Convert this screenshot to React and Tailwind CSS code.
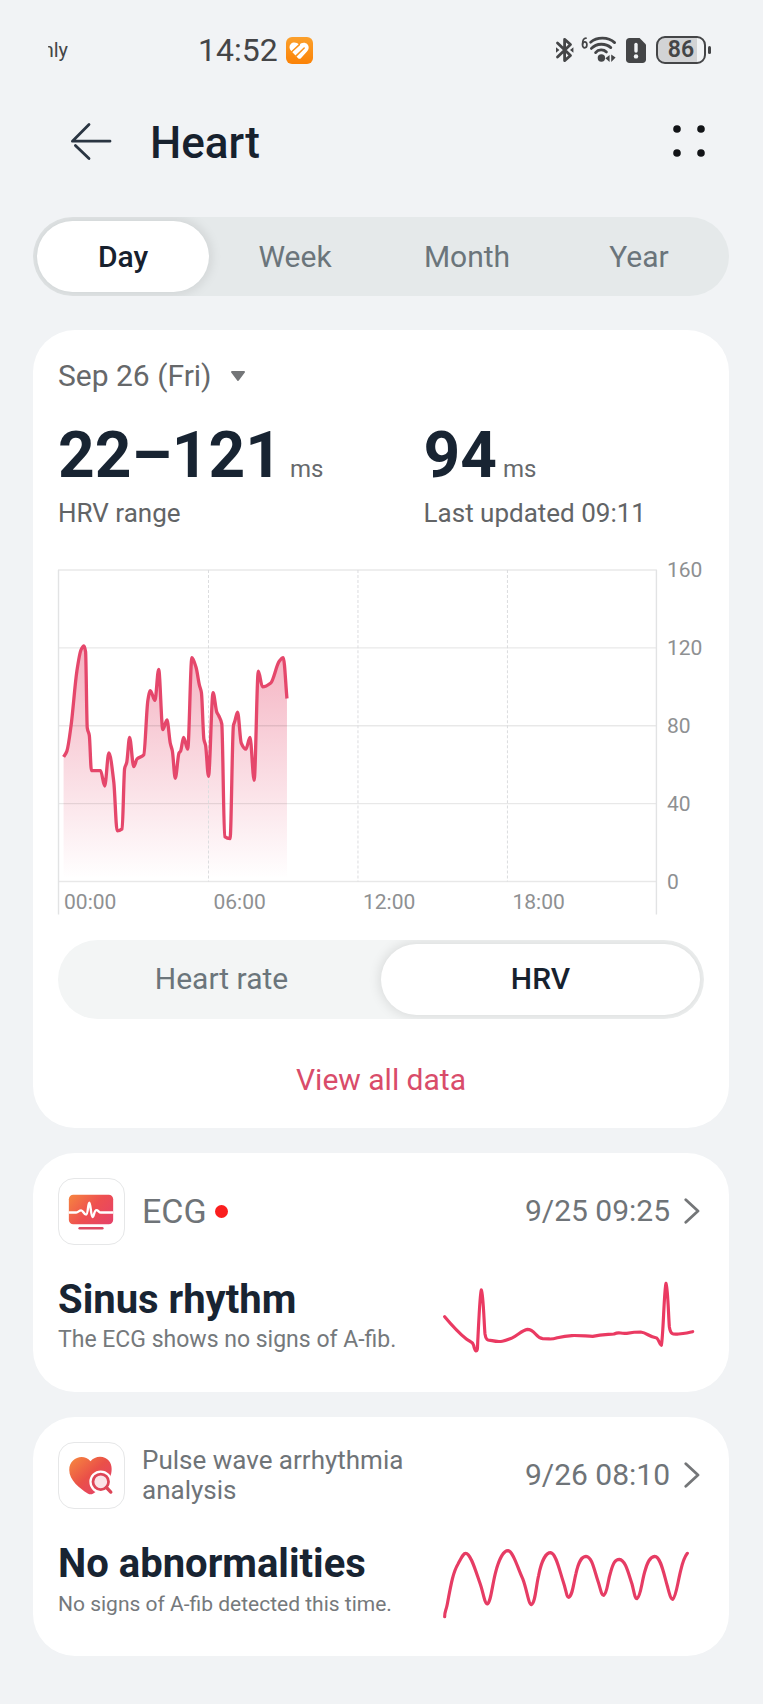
import React, { useState } from "react";

// [minute of the day, HRV in ms]
const hrvData = [
  [11, 64], [19, 67], [29, 80], [43, 108], [53, 119], [60, 121], [64, 118],
  [68, 79], [73, 75], [78, 57], [100, 57], [110, 49], [120, 66], [132, 51],
  [140, 26], [152, 27], [158, 58], [163, 61], [170, 74], [180, 59], [188, 63],
  [204, 65], [214, 93], [220, 98], [231, 93], [240, 109], [250, 78], [260, 83],
  [268, 71], [273, 67], [280, 53], [289, 66], [293, 67], [300, 74], [310, 68],
  [320, 115], [330, 110], [338, 101], [343, 97], [349, 73], [353, 70],
  [360, 54], [371, 97], [380, 87], [385, 85], [392, 81], [399, 23], [412, 22],
  [420, 80], [423, 82], [430, 87], [439, 71], [450, 68], [460, 74], [470, 52],
  [480, 108], [490, 100], [510, 102], [530, 113], [540, 115], [549, 94],
];

const PLOT_WIDTH = 597;
const PLOT_BOTTOM = 321;
const xOf = (minute) => 1 + (minute / 1440) * PLOT_WIDTH;
const yOf = (value) => PLOT_BOTTOM - (value / 160) * 311;

// Monotone cubic curve, so the line never overshoots a reading
const smoothPath = (points) => {
  const slopes = points.slice(1).map(([x, y], i) => {
    return (y - points[i][1]) / (x - points[i][0]);
  });
  const tangents = points.map((_, i) => {
    if (i === 0) return slopes[0];
    if (i === points.length - 1) return slopes[i - 1];
    const a = slopes[i - 1];
    const b = slopes[i];
    return a * b <= 0 ? 0 : (2 * a * b) / (a + b);
  });
  return points.slice(1).reduce((path, [x, y], i) => {
    const [px, py] = points[i];
    const d = (x - px) / 3;
    return `${path} C${px + d} ${py + tangents[i] * d} ${x - d} ${
      y - tangents[i + 1] * d
    } ${x} ${y}`;
  }, `M${points[0][0]} ${points[0][1]}`);
};

const StatusBar = () => (
  <div className="flex h-[100px] items-center justify-between pl-12 pr-[52px] text-[#444547]">
    <div className="flex items-center">
      <div className="flex w-5 justify-end overflow-hidden text-[20px] leading-7">
        nly
      </div>
      <div className="ml-[130px] text-[32px] leading-10">14:52</div>
      <svg className="ml-2 h-[27px] w-[27px]" viewBox="0 0 27 27" aria-hidden="true">
        <defs>
          <linearGradient id="appIcon" x1="0" y1="0" x2="0" y2="1">
            <stop offset="0" stopColor="#fba02c" />
            <stop offset="1" stopColor="#fb8206" />
          </linearGradient>
        </defs>
        <rect width="27" height="27" rx="6" fill="url(#appIcon)" />
        <path
          d="M13.2 7.8C15.2 5.2 19.4 4.9 21.4 7.2C23.4 9.6 23 12.2 21 14.4L14.9 21.2C14.1 22 12.9 22 12.1 21.2L5.2 14C3 11.6 3 8.8 4.8 6.9C7 4.7 11 5.2 13.2 7.8Z"
          fill="#fff"
        />
        <path
          d="M4.6 15.8L13.4 7.6M9.4 19.6L18.2 11"
          stroke="#fb921a"
          strokeWidth="1.5"
          strokeLinecap="round"
        />
      </svg>
    </div>

    <div className="flex items-center">
      <svg className="h-[26px] w-[19px]" viewBox="0 0 19 26" fill="none" aria-hidden="true">
        <path
          d="M2.5 6L15.5 18.5L9.6 23.6V2.4L15.5 7.5L2.5 20"
          stroke="currentColor"
          strokeWidth="2.8"
          strokeLinecap="round"
          strokeLinejoin="round"
        />
        <path d="M1 10.2L4.4 13L1 15.8ZM18.4 10.2L15 13L18.4 15.8Z" fill="currentColor" />
      </svg>
      <svg className="ml-[7px] h-[28px] w-9" viewBox="0 0 36 28" fill="none" aria-hidden="true">
        <g stroke="currentColor" strokeLinecap="round">
          <path d="M5 2.2C2.4 2.2 1.6 4 1.6 8" strokeWidth="1.7" />
          <ellipse cx="3.7" cy="8.8" rx="2.2" ry="3" strokeWidth="1.7" />
          <path d="M9.6 6.2C16 .8 27 .8 33.6 6.6" strokeWidth="2.8" />
          <path d="M10.4 12.4C15.6 7 24.6 7 29.8 11.6" strokeWidth="2.8" />
          <path d="M14.6 16.6C17.4 13.2 22.6 13.2 25.4 16" strokeWidth="2.8" />
        </g>
        <circle cx="20.4" cy="22" r="3.7" fill="currentColor" />
        <path d="M28.6 19V26L24.4 22.2ZM30.2 18.4V26L34.6 21.4Z" fill="currentColor" />
      </svg>
      <svg className="ml-[9px] h-[25px] w-5" viewBox="0 0 20 25" aria-hidden="true">
        <path
          d="M3.5 0H13.6L20 6.4V21.5C20 23.6 18.6 25 16.5 25H3.5C1.4 25 0 23.6 0 21.5V3.5C0 1.4 1.4 0 3.5 0Z"
          fill="currentColor"
        />
        <path d="M10 6.4V13" stroke="#f1f3f5" strokeWidth="3.4" strokeLinecap="round" />
        <circle cx="10" cy="18.4" r="2.2" fill="#f1f3f5" />
      </svg>
      <div className="ml-2.5 flex items-center gap-0.5">
        <div className="flex h-7 w-[50px] items-center justify-center rounded-[9px] border-2 border-[#444547] bg-linear-to-r from-[#d2d3d5] from-85% to-[#f1f3f5] to-85% text-[23px] leading-6 font-semibold">
          86
        </div>
        <div className="h-2 w-[3px] rounded-sm bg-[#444547]" />
      </div>
    </div>
  </div>
);

const Header = () => (
  <header className="flex h-[86px] items-center justify-between pl-[70px] pr-[58px]">
    <div className="flex items-center">
      <button aria-label="Back">
        <svg className="h-[42px] w-[42px]" viewBox="0 0 42 42" fill="none">
          <path
            d="M19 2.6L2.4 19.2H40M5.4 23.4L19 36.6"
            stroke="#2a3542"
            strokeWidth="2.8"
            strokeLinecap="round"
            strokeLinejoin="round"
          />
        </svg>
      </button>
      <h1 className="ml-[38px] text-[44px] leading-[52px] font-medium text-[#17212e]">
        Heart
      </h1>
    </div>
    <button aria-label="More options">
      <svg className="h-[36px] w-8" viewBox="0 0 32 36" fill="#121417">
        <circle cx="4" cy="4" r="3.8" />
        <circle cx="28" cy="4" r="3.8" />
        <circle cx="4" cy="28" r="3.8" />
        <circle cx="28" cy="28" r="3.8" />
      </svg>
    </button>
  </header>
);

const Segmented = ({ options, value, onChange, className }) => (
  <div
    className={`flex h-[79px] overflow-hidden rounded-full p-1 text-[30px] leading-10 ${className}`}
  >
    {options.map((option) => (
      <button
        key={option}
        onClick={() => onChange(option)}
        aria-pressed={option === value}
        className={`flex-1 rounded-full ${
          option === value
            ? "bg-white font-medium text-[#17212e] shadow-[0_0_12px_2px_rgba(0,0,0,0.1)]"
            : "text-[#6b757b]"
        }`}
      >
        {option}
      </button>
    ))}
  </div>
);

const Metric = ({ value, label, gap }) => (
  <div>
    <div className={`flex h-[72px] items-baseline ${gap}`}>
      <span className="text-[64px] leading-[72px] font-bold text-[#182432]">
        {value}
      </span>
      <span className="text-[24px] leading-9 text-[#66696c]">ms</span>
    </div>
    <div className="mt-[3px] text-[26px] leading-9 text-[#626466]">{label}</div>
  </div>
);

const HrvChart = () => {
  const points = hrvData.map(([minute, value]) => [xOf(minute), yOf(value)]);
  const line = smoothPath(points);
  const first = points[0][0];
  const last = points[points.length - 1][0];

  return (
    <svg
      className="mt-[29px] w-full overflow-visible"
      viewBox="0 0 645 356"
      role="img"
      aria-label="HRV"
    >
      <defs>
        <linearGradient id="hrvFill" x1="0" y1="86" x2="0" y2="318" gradientUnits="userSpaceOnUse">
          <stop offset="0" stopColor="#e5476b" stopOpacity="0.42" />
          <stop offset="1" stopColor="#e5476b" stopOpacity="0" />
        </linearGradient>
      </defs>
      <path
        d={`${line} L${last} ${PLOT_BOTTOM} L${first} ${PLOT_BOTTOM} Z`}
        fill="url(#hrvFill)"
      />
      {[0, 40, 80, 120, 160].map((value) => (
        <g key={value}>
          <line
            x1="0"
            x2="598"
            y1={yOf(value)}
            y2={yOf(value)}
            stroke="#000"
            strokeOpacity="0.09"
            strokeWidth="1.4"
          />
          <text x="608" y={yOf(value) + 7} fontSize="21" fill="#8e9092">
            {value}
          </text>
        </g>
      ))}
      {[360, 720, 1080].map((minute) => (
        <line
          key={minute}
          x1={xOf(minute)}
          x2={xOf(minute)}
          y1="10"
          y2={PLOT_BOTTOM}
          stroke="#dcdddf"
          strokeDasharray="3 2"
        />
      ))}
      <path d="M0.5 10V354M597.5 10V354" stroke="#e2e3e4" strokeWidth="1.4" />
      {["00:00", "06:00", "12:00", "18:00"].map((label, i) => (
        <text key={label} x={xOf(i * 360) + 5} y="348" fontSize="21" fill="#8e9092">
          {label}
        </text>
      ))}
      <path
        d={line}
        fill="none"
        stroke="#e5476b"
        strokeWidth="3.3"
        strokeLinejoin="round"
      />
    </svg>
  );
};

const EcgIcon = () => (
  <svg className="h-full w-full" viewBox="0 0 66 66" fill="none" aria-hidden="true">
    <defs>
      <linearGradient id="ecgIcon" x1="10" y1="16" x2="50" y2="52" gradientUnits="userSpaceOnUse">
        <stop offset="0" stopColor="#f6853f" />
        <stop offset="0.5" stopColor="#ee4f50" />
        <stop offset="1" stopColor="#e5416a" />
      </linearGradient>
    </defs>
    <rect x="10" y="16" width="45" height="30" rx="4.5" fill="url(#ecgIcon)" />
    <path
      d="M10 34H17.5C19.5 34 20.5 31.8 22.5 31.8C24.5 31.8 25.5 36.2 27.5 36.2C29.5 36.2 29.4 24 30.8 24C32.2 24 32.4 38.6 34 38.6C35.6 38.6 35.6 31.6 38 31.6C40 31.6 40.4 34 42.5 34H55"
      stroke="#fff"
      strokeWidth="2.4"
      strokeLinejoin="round"
    />
    <path d="M21 50H44" stroke="#dd4a63" strokeWidth="2.6" strokeLinecap="round" />
  </svg>
);

const PulseIcon = () => (
  <svg className="h-full w-full" viewBox="0 0 66 66" fill="none" aria-hidden="true">
    <defs>
      <linearGradient id="pulseIcon" x1="12" y1="16" x2="42" y2="50" gradientUnits="userSpaceOnUse">
        <stop offset="0" stopColor="#f6853f" />
        <stop offset="0.55" stopColor="#ea5048" />
        <stop offset="1" stopColor="#e64366" />
      </linearGradient>
    </defs>
    <path
      d="M32 18.6C35.6 14 42 12.8 47 15.2C53 18.2 54.4 24.6 53 31C51.6 39 42 47 34.8 51.2C32.8 52.4 31.2 52.4 29.2 51.2C21 46.2 10.4 37.6 10.4 27.4C10.4 15.2 24.6 9.8 32 18.6Z"
      fill="url(#pulseIcon)"
    />
    <path d="M44 40L56 52" stroke="#fff" strokeWidth="8" />
    <circle cx="42.4" cy="39.4" r="11.6" fill="#fff" />
    <circle cx="42.4" cy="39.4" r="7.9" fill="#fbe3e7" stroke="#dd4557" strokeWidth="2.8" />
    <path d="M48.2 45.2L52.6 49.8" stroke="#dd4557" strokeWidth="3.4" strokeLinecap="round" />
  </svg>
);

const RecordCard = ({ icon, heading, time, result, detail, children }) => (
  <section className="mt-[25px] rounded-[42px] bg-white px-[25px] pt-[25px] pb-9">
    <a href="#record" className="flex h-[67px] items-center text-[#6f7478]">
      <div className="h-[67px] w-[67px] shrink-0 rounded-2xl border border-[#e6e7e8]">
        {icon}
      </div>
      <div className="ml-[17px] flex flex-1 items-center">{heading}</div>
      <div className="text-[30px] leading-10">{time}</div>
      <svg className="mr-1 ml-[14px] h-[26px] w-4" viewBox="0 0 16 26" fill="none" aria-hidden="true">
        <path
          d="M1.8 1.8L14 13L1.8 24.2"
          stroke="#747678"
          strokeWidth="2.8"
          strokeLinecap="round"
          strokeLinejoin="round"
        />
      </svg>
    </a>
    <div className="mt-[31px] flex items-end justify-between">
      <div>
        <h2 className="text-[40px] leading-12 font-bold text-[#182432]">{result}</h2>
        {detail}
      </div>
      {children}
    </div>
  </section>
);

const App = () => {
  const [range, setRange] = useState("Day");
  const [metric, setMetric] = useState("HRV");

  return (
    <div className="min-h-screen bg-[#f1f3f5] pb-[50px] font-['Roboto',sans-serif]">
      <StatusBar />
      <Header />
      <main className="pr-[34px] pl-[33px]">
        <Segmented
          options={["Day", "Week", "Month", "Year"]}
          value={range}
          onChange={setRange}
          className="mt-[31px] bg-[#e5e9ea]"
        />

        <section className="mt-[34px] rounded-[42px] bg-white px-[25px] pt-[26px] pb-7">
          <button className="flex items-center gap-[18px] text-[30px] leading-10 text-[#66686a]">
            Sep 26 (Fri)
            <svg className="h-3 w-4" viewBox="0 0 16 12" aria-hidden="true">
              <path
                d="M2 2H14L8 10Z"
                fill="#747678"
                stroke="#747678"
                strokeWidth="2"
                strokeLinejoin="round"
              />
            </svg>
          </button>

          <div className="mt-6 grid grid-cols-[365fr_280fr]">
            <Metric value="22–121" label="HRV range" gap="gap-2" />
            <Metric value="94" label="Last updated 09:11" gap="gap-1.5" />
          </div>

          <HrvChart />

          <Segmented
            options={["Heart rate", "HRV"]}
            value={metric}
            onChange={setMetric}
            className="mt-[23px] bg-[#f3f5f5]"
          />

          <a
            href="#data"
            className="mt-[41px] block text-center text-[30px] leading-10 text-[#d94c6a]"
          >
            View all data
          </a>
        </section>

        <RecordCard
          icon={<EcgIcon />}
          heading={
            <>
              <span className="text-[34px] leading-10">ECG</span>
              <span className="ml-2 h-[13px] w-[13px] rounded-full bg-[#fa1e1e]" />
            </>
          }
          time="9/25 09:25"
          result="Sinus rhythm"
          detail={
            <p className="text-[23px] leading-8 text-[#75797c]">
              The ECG shows no signs of A-fib.
            </p>
          }
        >
          <svg className="mr-2 h-[76px] w-[254px]" viewBox="122 390 762 228" fill="none" aria-hidden="true">
            <path
              d="M130 500C160 536 178 553 196 568C206 576 214 574 217 586C219 596 221 601 224 603C230 603 228 590 230 560C233 500 236 430 240 420C246 430 248 520 251 552C254 574 262 570 272 572C300 578 312 572 330 565C350 556 362 540 378 538C402 538 402 564 424 566C452 566 446 570 468 563C510 553 530 557 574 559C604 553 620 554 638 552C656 544 654 552 676 550C700 546 708 546 718 546C738 549 742 560 766 564C774 570 774 584 780 586C786 560 788 420 794 400C800 420 801 490 804 530C808 556 816 553 832 552C856 549 862 548 874 545"
              stroke="#ea3a62"
              strokeWidth="9.5"
              strokeLinecap="round"
              strokeLinejoin="round"
            />
          </svg>
        </RecordCard>

        <RecordCard
          icon={<PulseIcon />}
          heading={
            <span className="max-w-[280px] text-[26px] leading-[30px]">
              Pulse wave arrhythmia analysis
            </span>
          }
          time="9/26 08:10"
          result="No abnormalities"
          detail={
            <p className="text-[21px] leading-8 text-[#75797c]">
              No signs of A-fib detected this time.
            </p>
          }
        >
          <svg className="mr-2 h-[76px] w-[254px]" viewBox="122 396 762 228" fill="none" aria-hidden="true">
            <path
              d="M130 614C130 596 134 598 138 576C150 510 156 480 170 456C182 434 186 424 193 424C208 424 222 474 236 514C246 542 250 576 258 576C268 572 272 524 282 484C292 444 306 416 320 416C336 418 348 466 364 500C376 530 382 578 390 578C402 574 404 522 412 490C420 448 434 422 448 422C464 424 474 474 486 510C494 534 496 556 502 556C514 550 516 516 524 484C532 448 540 434 554 433C572 434 578 472 590 508C598 532 600 550 607 550C618 544 618 512 628 480C636 452 642 442 654 442C672 444 680 480 692 516C698 538 700 560 707 560C718 554 720 516 730 480C738 450 746 434 760 433C778 434 786 480 798 522C804 544 808 562 814 562C824 556 828 516 838 476C844 450 850 434 858 424"
              stroke="#e63c64"
              strokeWidth="9.5"
              strokeLinecap="round"
              strokeLinejoin="round"
            />
          </svg>
        </RecordCard>
      </main>
    </div>
  );
};

export default App;
